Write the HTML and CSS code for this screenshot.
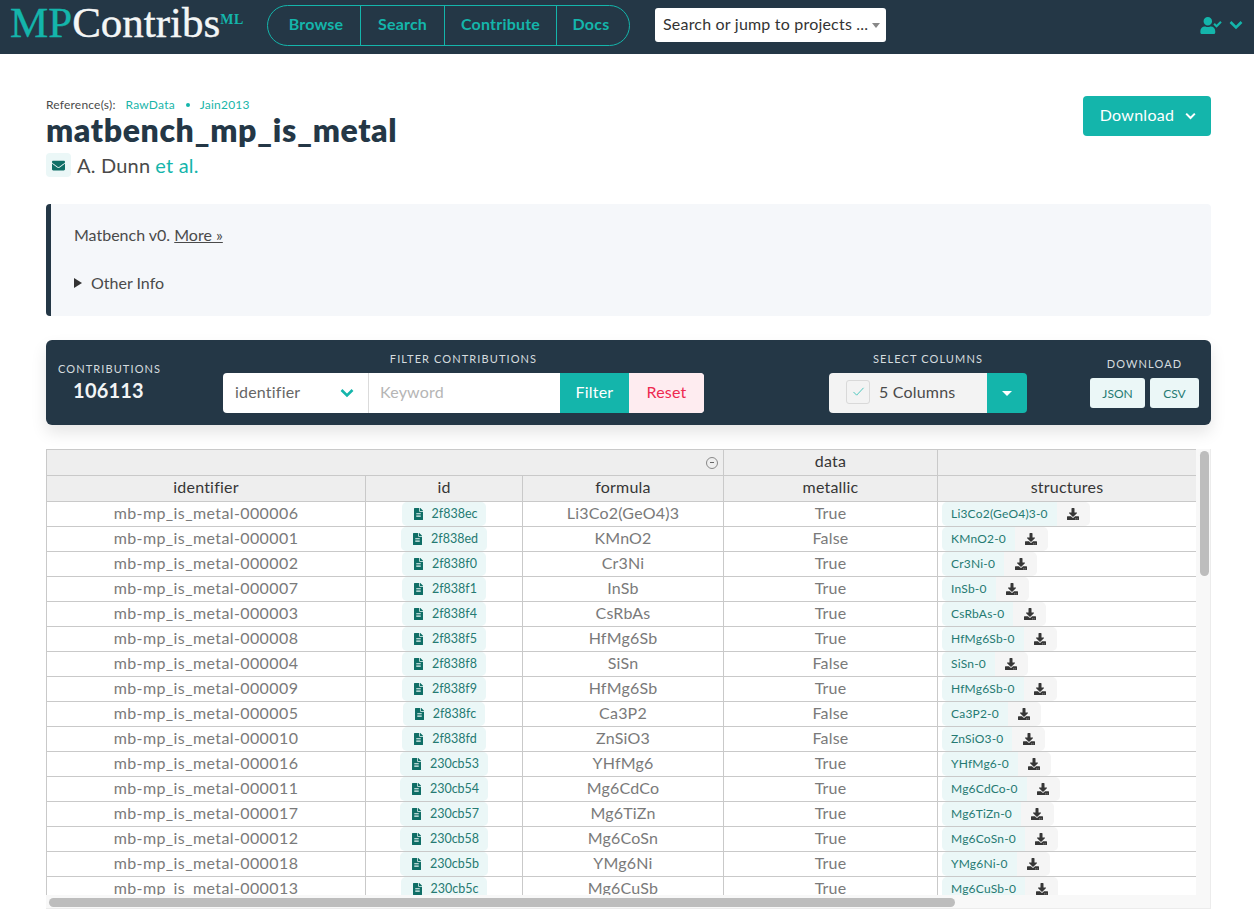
FILE: index.html
```html
<!DOCTYPE html>
<html lang="en">
<head>
<meta charset="utf-8">
<title>matbench_mp_is_metal</title>
<link rel="stylesheet" href="styles.css">
</head>
<body>
<svg class="defs" aria-hidden="true">
  <symbol id="i-file" viewBox="0 0 384 512"><path d="M224 136V0H24C10.7 0 0 10.7 0 24v464c0 13.3 10.7 24 24 24h336c13.3 0 24-10.7 24-24V160H248c-13.2 0-24-10.8-24-24zm64 236c0 6.6-5.4 12-12 12H108c-6.6 0-12-5.4-12-12v-8c0-6.6 5.4-12 12-12h168c6.6 0 12 5.4 12 12v8zm0-64c0 6.6-5.4 12-12 12H108c-6.6 0-12-5.4-12-12v-8c0-6.6 5.4-12 12-12h168c6.6 0 12 5.4 12 12v8zm0-72v8c0 6.6-5.4 12-12 12H108c-6.6 0-12-5.4-12-12v-8c0-6.6 5.4-12 12-12h168c6.6 0 12 5.4 12 12zm96-114.1v6.1H256V0h6.1c6.4 0 12.5 2.5 17 7l97.9 98c4.5 4.5 7 10.6 7 16.9z"/></symbol>
  <symbol id="i-dl" viewBox="0 0 512 512"><path d="M216 0h80c13.3 0 24 10.7 24 24v168h87.7c17.8 0 26.7 21.5 14.1 34.1L269.7 378.3c-7.5 7.5-19.8 7.5-27.3 0L90.1 226.1c-12.6-12.6-3.7-34.1 14.1-34.1H192V24c0-13.3 10.7-24 24-24zm296 376v112c0 13.3-10.7 24-24 24H24c-13.3 0-24-10.7-24-24V376c0-13.3 10.7-24 24-24h146.7l49 49c20.1 20.1 52.5 20.1 72.6 0l49-49H488c13.3 0 24 10.7 24 24zm-124 88c0-11-9-20-20-20s-20 9-20 20 9 20 20 20 20-9 20-20zm64 0c0-11-9-20-20-20s-20 9-20 20 9 20 20 20 20-9 20-20z"/></symbol>
  <symbol id="i-chev" viewBox="0 0 14 10"><path d="M1.5 2 7 7.5 12.5 2" fill="none" stroke="currentColor" stroke-width="2.6"/></symbol>
</svg>

<nav class="navbar">
  <a class="logo"><span class="logo-mp">MP</span>Contribs<sup class="logo-ml">ML</sup></a>
  <div class="nav-group">
    <a class="nav-link nav-browse">Browse</a>
    <a class="nav-link nav-search">Search</a>
    <a class="nav-link nav-contribute">Contribute</a>
    <a class="nav-link nav-docs">Docs</a>
  </div>
  <div class="jump"><span>Search or jump to projects ...</span><i class="jump-caret"></i></div>
  <div class="user">
    <svg class="user-icon" viewBox="0 0 640 512"><path d="M224 256c70.7 0 128-57.3 128-128S294.7 0 224 0 96 57.3 96 128s57.3 128 128 128zm89.6 32h-16.7c-22.2 10.2-46.9 16-72.9 16s-50.6-5.8-72.9-16h-16.7C60.2 288 0 348.2 0 422.4V464c0 26.5 21.5 48 48 48h352c26.5 0 48-21.5 48-48v-41.6c0-74.2-60.2-134.4-134.4-134.4zm323-128.4l-27.8-28.1c-4.6-4.7-12.1-4.7-16.8-.1l-104.8 104-45.5-45.8c-4.6-4.7-12.1-4.7-16.8-.1l-28.1 27.9c-4.7 4.6-4.7 12.1-.1 16.8l81.7 82.3c4.6 4.7 12.1 4.7 16.8.1l141.3-140.2c4.7-4.7 4.7-12.2.1-16.9z"/></svg>
    <svg class="user-chev"><use href="#i-chev"/></svg>
  </div>
</nav>

<main class="page">
  <header class="head">
    <div class="head-left">
      <p class="refs"><span class="refs-label">Reference(s):</span><a>RawData</a><i class="dot"></i><a>Jain2013</a></p>
      <h1 class="title">matbench_mp_is_metal</h1>
      <p class="authors">
        <span class="mail"><svg viewBox="0 0 512 512"><path d="M502.3 190.8c3.9-3.1 9.7-.2 9.7 4.7V400c0 26.5-21.5 48-48 48H48c-26.5 0-48-21.5-48-48V195.6c0-5 5.7-7.8 9.7-4.7 22.4 17.4 52.1 39.5 154.1 113.6 21.1 15.4 56.7 47.8 92.2 47.6 35.7.3 72-32.8 92.3-47.6 102-74.1 131.6-96.3 154-113.7zM256 320c23.2.4 56.6-29.2 73.4-41.4 132.7-96.3 142.8-104.7 173.4-128.7 5.8-4.5 9.2-11.5 9.2-18.9v-19c0-26.5-21.5-48-48-48H48C21.5 64 0 85.5 0 112v19c0 7.4 3.4 14.3 9.2 18.9 30.6 23.9 40.7 32.4 173.4 128.7 16.8 12.2 50.2 41.8 73.4 41.4z"/></svg></span>
        <span class="author-name">A. Dunn</span> <a class="author-more">et al.</a>
      </p>
    </div>
    <button class="download-btn"><span>Download</span><svg><use href="#i-chev"/></svg></button>
  </header>

  <section class="desc">
    <p class="desc-text">Matbench v0. <a class="more">More »</a></p>
    <p class="other"><i class="tri"></i>Other Info</p>
  </section>

  <section class="toolbar">
    <div class="tb-count">
      <div class="tb-label">CONTRIBUTIONS</div>
      <div class="tb-num">106113</div>
    </div>
    <div class="tb-filter">
      <div class="tb-label">FILTER CONTRIBUTIONS</div>
      <div class="filter-group">
        <div class="f-select"><span>identifier</span><svg><use href="#i-chev"/></svg></div>
        <div class="f-input">Keyword</div>
        <div class="f-btn">Filter</div>
        <div class="f-reset">Reset</div>
      </div>
    </div>
    <div class="tb-cols">
      <div class="tb-label">SELECT COLUMNS</div>
      <div class="cols-group">
        <div class="cols-main"><span class="cols-check"><svg viewBox="0 0 14 12"><path d="M1.5 6.5 5 10l7.5-8" fill="none" stroke="#3fc4ba" stroke-width="1"/></svg></span><span>5 Columns</span></div>
        <div class="cols-btn"><i></i></div>
      </div>
    </div>
    <div class="tb-dl">
      <div class="tb-label">DOWNLOAD</div>
      <div class="dl-btns"><span class="dl-b dl-json">JSON</span><span class="dl-b dl-csv">CSV</span></div>
    </div>
  </section>

  <div class="scroller">
    <div class="viewport">
      <table class="grid">
        <colgroup><col class="c1"><col class="c2"><col class="c3"><col class="c4"><col class="c5"></colgroup>
        <thead>
          <tr><th colspan="3" class="collapse-cell"><span class="collapse"></span></th><th>data</th><th></th></tr>
          <tr><th>identifier</th><th>id</th><th>formula</th><th>metallic</th><th>structures</th></tr>
        </thead>
        <tbody>
          <tr><td>mb-mp_is_metal-000006</td><td><a class="idp"><svg><use href="#i-file"/></svg>2f838ec</a></td><td>Li3Co2(GeO4)3</td><td>True</td><td><a class="st"><span>Li3Co2(GeO4)3-0</span><b><svg><use href="#i-dl"/></svg></b></a></td></tr>
          <tr><td>mb-mp_is_metal-000001</td><td><a class="idp"><svg><use href="#i-file"/></svg>2f838ed</a></td><td>KMnO2</td><td>False</td><td><a class="st"><span>KMnO2-0</span><b><svg><use href="#i-dl"/></svg></b></a></td></tr>
          <tr><td>mb-mp_is_metal-000002</td><td><a class="idp"><svg><use href="#i-file"/></svg>2f838f0</a></td><td>Cr3Ni</td><td>True</td><td><a class="st"><span>Cr3Ni-0</span><b><svg><use href="#i-dl"/></svg></b></a></td></tr>
          <tr><td>mb-mp_is_metal-000007</td><td><a class="idp"><svg><use href="#i-file"/></svg>2f838f1</a></td><td>InSb</td><td>True</td><td><a class="st"><span>InSb-0</span><b><svg><use href="#i-dl"/></svg></b></a></td></tr>
          <tr><td>mb-mp_is_metal-000003</td><td><a class="idp"><svg><use href="#i-file"/></svg>2f838f4</a></td><td>CsRbAs</td><td>True</td><td><a class="st"><span>CsRbAs-0</span><b><svg><use href="#i-dl"/></svg></b></a></td></tr>
          <tr><td>mb-mp_is_metal-000008</td><td><a class="idp"><svg><use href="#i-file"/></svg>2f838f5</a></td><td>HfMg6Sb</td><td>True</td><td><a class="st"><span>HfMg6Sb-0</span><b><svg><use href="#i-dl"/></svg></b></a></td></tr>
          <tr><td>mb-mp_is_metal-000004</td><td><a class="idp"><svg><use href="#i-file"/></svg>2f838f8</a></td><td>SiSn</td><td>False</td><td><a class="st"><span>SiSn-0</span><b><svg><use href="#i-dl"/></svg></b></a></td></tr>
          <tr><td>mb-mp_is_metal-000009</td><td><a class="idp"><svg><use href="#i-file"/></svg>2f838f9</a></td><td>HfMg6Sb</td><td>True</td><td><a class="st"><span>HfMg6Sb-0</span><b><svg><use href="#i-dl"/></svg></b></a></td></tr>
          <tr><td>mb-mp_is_metal-000005</td><td><a class="idp"><svg><use href="#i-file"/></svg>2f838fc</a></td><td>Ca3P2</td><td>False</td><td><a class="st"><span>Ca3P2-0</span><b><svg><use href="#i-dl"/></svg></b></a></td></tr>
          <tr><td>mb-mp_is_metal-000010</td><td><a class="idp"><svg><use href="#i-file"/></svg>2f838fd</a></td><td>ZnSiO3</td><td>False</td><td><a class="st"><span>ZnSiO3-0</span><b><svg><use href="#i-dl"/></svg></b></a></td></tr>
          <tr><td>mb-mp_is_metal-000016</td><td><a class="idp"><svg><use href="#i-file"/></svg>230cb53</a></td><td>YHfMg6</td><td>True</td><td><a class="st"><span>YHfMg6-0</span><b><svg><use href="#i-dl"/></svg></b></a></td></tr>
          <tr><td>mb-mp_is_metal-000011</td><td><a class="idp"><svg><use href="#i-file"/></svg>230cb54</a></td><td>Mg6CdCo</td><td>True</td><td><a class="st"><span>Mg6CdCo-0</span><b><svg><use href="#i-dl"/></svg></b></a></td></tr>
          <tr><td>mb-mp_is_metal-000017</td><td><a class="idp"><svg><use href="#i-file"/></svg>230cb57</a></td><td>Mg6TiZn</td><td>True</td><td><a class="st"><span>Mg6TiZn-0</span><b><svg><use href="#i-dl"/></svg></b></a></td></tr>
          <tr><td>mb-mp_is_metal-000012</td><td><a class="idp"><svg><use href="#i-file"/></svg>230cb58</a></td><td>Mg6CoSn</td><td>True</td><td><a class="st"><span>Mg6CoSn-0</span><b><svg><use href="#i-dl"/></svg></b></a></td></tr>
          <tr><td>mb-mp_is_metal-000018</td><td><a class="idp"><svg><use href="#i-file"/></svg>230cb5b</a></td><td>YMg6Ni</td><td>True</td><td><a class="st"><span>YMg6Ni-0</span><b><svg><use href="#i-dl"/></svg></b></a></td></tr>
          <tr><td>mb-mp_is_metal-000013</td><td><a class="idp"><svg><use href="#i-file"/></svg>230cb5c</a></td><td>Mg6CuSb</td><td>True</td><td><a class="st"><span>Mg6CuSb-0</span><b><svg><use href="#i-dl"/></svg></b></a></td></tr>
        </tbody>
      </table>
    </div>
    <div class="thumb-v"></div>
    <div class="thumb-h"></div>
  </div>
</main>
</body>
</html>
```

FILE: styles.css
```css
* { box-sizing: border-box; }
html, body { margin: 0; padding: 0; background: #fff; }
body { font-family: "Lato", "Noto Sans", sans-serif; color: #4a4a4a; font-size: 16px; letter-spacing: .2px; height: 923px; overflow: hidden; }
p, h1 { margin: 0; }
.defs { display: none; }

/* navbar */
.navbar { height: 54px; background: #243746; display: flex; align-items: center; padding-left: 10px; padding-right: 11px; }
.logo { font-family: "Liberation Serif", serif; font-size: 43px; letter-spacing: 0; color: #f4f6f6; width: 257px; line-height: 46px; white-space: nowrap; height: 54px; -webkit-text-stroke: .4px; }
.logo-mp { color: #14b5ab; }
.logo-ml { font-size: 14px; font-weight: bold; color: #14b5ab; line-height: 0; vertical-align: 13px; letter-spacing: .5px; -webkit-text-stroke: 0; }
.nav-group { display: flex; width: 363px; height: 41px; border: 1px solid #14b5ab; border-radius: 21px; margin-top: -4px; }
.nav-link { display: flex; align-items: center; justify-content: center; color: #14b5ab; font-weight: 700; font-size: 16px; border-right: 1px solid #14b5ab; padding-bottom: 3px; }
.nav-browse { width: 93px; padding-left: 4px; }
.nav-search { width: 84px; }
.nav-contribute { width: 112px; }
.nav-docs { flex: 1; border-right: 0; padding-right: 4px; }
.jump { margin-left: 25px; margin-top: -4px; width: 231px; height: 34px; background: #fff; border-radius: 3px; display: flex; align-items: center; padding: 0 6px 3px 8px; justify-content: space-between; color: #333; font-size: 16px; }
.jump-caret { width: 0; height: 0; border: 4px solid transparent; border-top: 5px solid #888; border-bottom: 0; margin-top: 3px; }
.user { margin-left: auto; display: flex; align-items: center; gap: 7px; color: #14b5ab; margin-top: -4px; }
.user-icon { width: 22px; height: 17px; fill: #14b5ab; }
.user-chev { width: 14px; height: 10px; }

/* heading */
.page { padding: 43px 43px 0 46px; }
.head { display: flex; justify-content: space-between; align-items: flex-start; height: 107px; }
.refs { font-size: 12px; line-height: 16px; color: #4a4a4a; display: flex; align-items: center; }
.refs-label { margin-right: 10px; }
.refs a { color: #19b5a9; }
.dot { width: 4px; height: 4px; border-radius: 50%; background: #14b5ab; margin: 0 10px 0 11px; }
.title { font-size: 32px; line-height: 38px; color: #243746; font-weight: 800; letter-spacing: .62px; margin-top: -2px; }
.authors { display: flex; align-items: center; font-size: 20px; line-height: 26px; color: #4a4a4a; margin-top: 3px; }
.mail { width: 25px; height: 24px; background: #ebf7f7; border-radius: 4px; display: flex; align-items: center; justify-content: center; margin-right: 6px; }
.mail svg { width: 13px; height: 13px; fill: #0f6e66; }
.author-more { color: #14b5ab; margin-left: 5px; }
.download-btn { margin-top: -1px; width: 128px; height: 40px; background: #14b5ab; color: #fff; border: 0; border-radius: 4px; font: inherit; font-size: 16px; letter-spacing: .3px; display: flex; align-items: center; justify-content: center; gap: 11px; padding: 0 0 3px 2px; }
.download-btn svg { width: 11px; height: 8px; margin-top: 2px; }

/* description */
.desc { height: 112px; background: #f5f7fa; border-left: 5px solid #243746; border-radius: 4px; padding: 21px 28px 0 23px; font-size: 16px; line-height: 19px; color: #4a4a4a; letter-spacing: 0; }
.more { text-decoration: underline; }
.other { margin-top: 29px; display: flex; align-items: center; }
.tri { width: 0; height: 0; border: 5px solid transparent; border-left: 8px solid #333; border-right: 0; margin-right: 9px; }

/* toolbar */
.toolbar { margin-top: 24px; height: 85px; background: #243746; border-radius: 6px; box-shadow: 0 8px 16px rgba(10, 10, 10, .1); display: flex; color: #fff; }
.tb-label { font-size: 11px; font-weight: 400; letter-spacing: 1.1px; line-height: 14px; color: #d5dcdf; text-align: center; white-space: nowrap; }
.tb-count { width: 177px; padding: 22px 64px 0 12px; }
.tb-count .tb-label { width: 101px; }
.tb-num { font-size: 20px; font-weight: 700; line-height: 28px; text-align: center; width: 101px; color: #f2f4f5; }
.tb-filter { width: 481px; padding-top: 12px; }
.filter-group { display: flex; height: 40px; margin-top: 7px; border-radius: 4px; overflow: hidden; font-size: 16px; background: #fff; }
.filter-group > div { padding-bottom: 3px; }
.f-select { width: 146px; border-right: 1px solid #dbdbdb; padding: 0 14px 0 12px; display: flex; align-items: center; justify-content: space-between; color: #666; }
.f-select svg { width: 14px; height: 10px; color: #14b5ab; margin-top: 3px; }
.f-input { width: 191px; padding-left: 11px; color: #b5b5b5; display: flex; align-items: center; }
.f-btn { width: 69px; background: #14b5ab; color: #fff; display: flex; align-items: center; justify-content: center; }
.f-reset { flex: 1; background: #feecf0; color: #ee2a50; display: flex; align-items: center; justify-content: center; }
.tb-cols { width: 198px; margin-left: 125px; padding-top: 12px; }
.cols-group { display: flex; height: 40px; margin-top: 7px; border-radius: 4px; overflow: hidden; }
.cols-main { flex: 1; background: #f3f3f3; color: #4a4a4a; font-size: 16px; display: flex; align-items: center; padding-left: 17px; gap: 9px; }
.cols-main span:last-child { margin-bottom: 3px; }
.cols-check { width: 24px; height: 24px; border: 1px solid #d9d9d9; border-radius: 3px; display: flex; align-items: center; justify-content: center; margin-bottom: 3px; }
.cols-check svg { width: 13px; height: 11px; }
.cols-btn { width: 40px; background: #14b5ab; display: flex; align-items: center; justify-content: center; }
.cols-btn i { width: 0; height: 0; border: 5px solid transparent; border-top: 5px solid #fff; border-bottom: 0; }
.tb-dl { margin-left: 63px; padding-top: 17px; width: 109px; }
.dl-btns { display: flex; gap: 5px; margin-top: 7px; }
.dl-b { height: 30px; background: #ebf7f7; border-radius: 3px; color: #257a72; font-size: 12px; letter-spacing: 0; display: flex; align-items: center; justify-content: center; }
.dl-json { width: 55px; }
.dl-csv { width: 49px; }

/* table */
.scroller { position: relative; margin-top: 24px; width: 1165px; height: 460px; background: #f8f8f8; border-right: 1px solid #ececec; border-bottom: 1px solid #ececec; }
.viewport { width: 1150px; height: 446px; overflow: hidden; background: #fff; }
.thumb-v { position: absolute; left: 1154px; top: 2px; width: 9px; height: 125px; border-radius: 5px; background: #bdbdbd; }
.thumb-h { position: absolute; left: 3px; top: 449px; width: 906px; height: 9px; border-radius: 5px; background: #bdbdbd; }
.grid { table-layout: fixed; width: 1150px; border-collapse: collapse; font-size: 16px; }
.c1 { width: 319px; } .c2 { width: 157px; } .c3 { width: 201px; } .c4 { width: 214px; } .c5 { width: 259px; }
.grid th, .grid td { border: 1px solid #c9c9c9; padding: 0; text-align: center; white-space: nowrap; overflow: hidden; }
.grid th { height: 26px; background: #eeeeee; font-weight: 400; color: #363636; font-size: 16px; line-height: 21px; padding-bottom: 4px; }
.grid td { height: 25px; line-height: 21px; color: #7a7a7a; padding-bottom: 3px; }
.grid td:first-child { letter-spacing: .4px; }
.grid td:nth-child(2) { padding-bottom: 0; }
.grid td:last-child { text-align: left; padding: 0 0 0 4px; }
.collapse-cell { position: relative; }
.collapse { position: absolute; right: 5px; top: 7px; width: 12px; height: 12px; border: 1px solid #888; border-radius: 50%; }
.collapse::after { content: ""; position: absolute; left: 3px; top: 4px; width: 4px; height: 1px; background: #666; }
.idp { display: inline-flex; align-items: center; justify-content: center; height: 24px; padding: 0 9px 1px 12px; background: #ebf7f7; border-radius: 5px; color: #257a72; font-size: 12.5px; letter-spacing: 0; gap: 9px; vertical-align: top; }
.idp svg { width: 9px; height: 12px; fill: #0f6e66; margin-top: 1px; }
.st { display: inline-flex; height: 24px; vertical-align: top; color: #257a72; font-size: 12px; }
.st span { background: #ebf7f7; padding: 0 9px 1px; border-radius: 5px 0 0 5px; display: flex; align-items: center; }
.st b { background: #f5f5f5; width: 33px; border-radius: 0 5px 5px 0; display: flex; align-items: center; justify-content: center; }
.st svg { width: 12px; height: 12px; fill: #363636; }
```
